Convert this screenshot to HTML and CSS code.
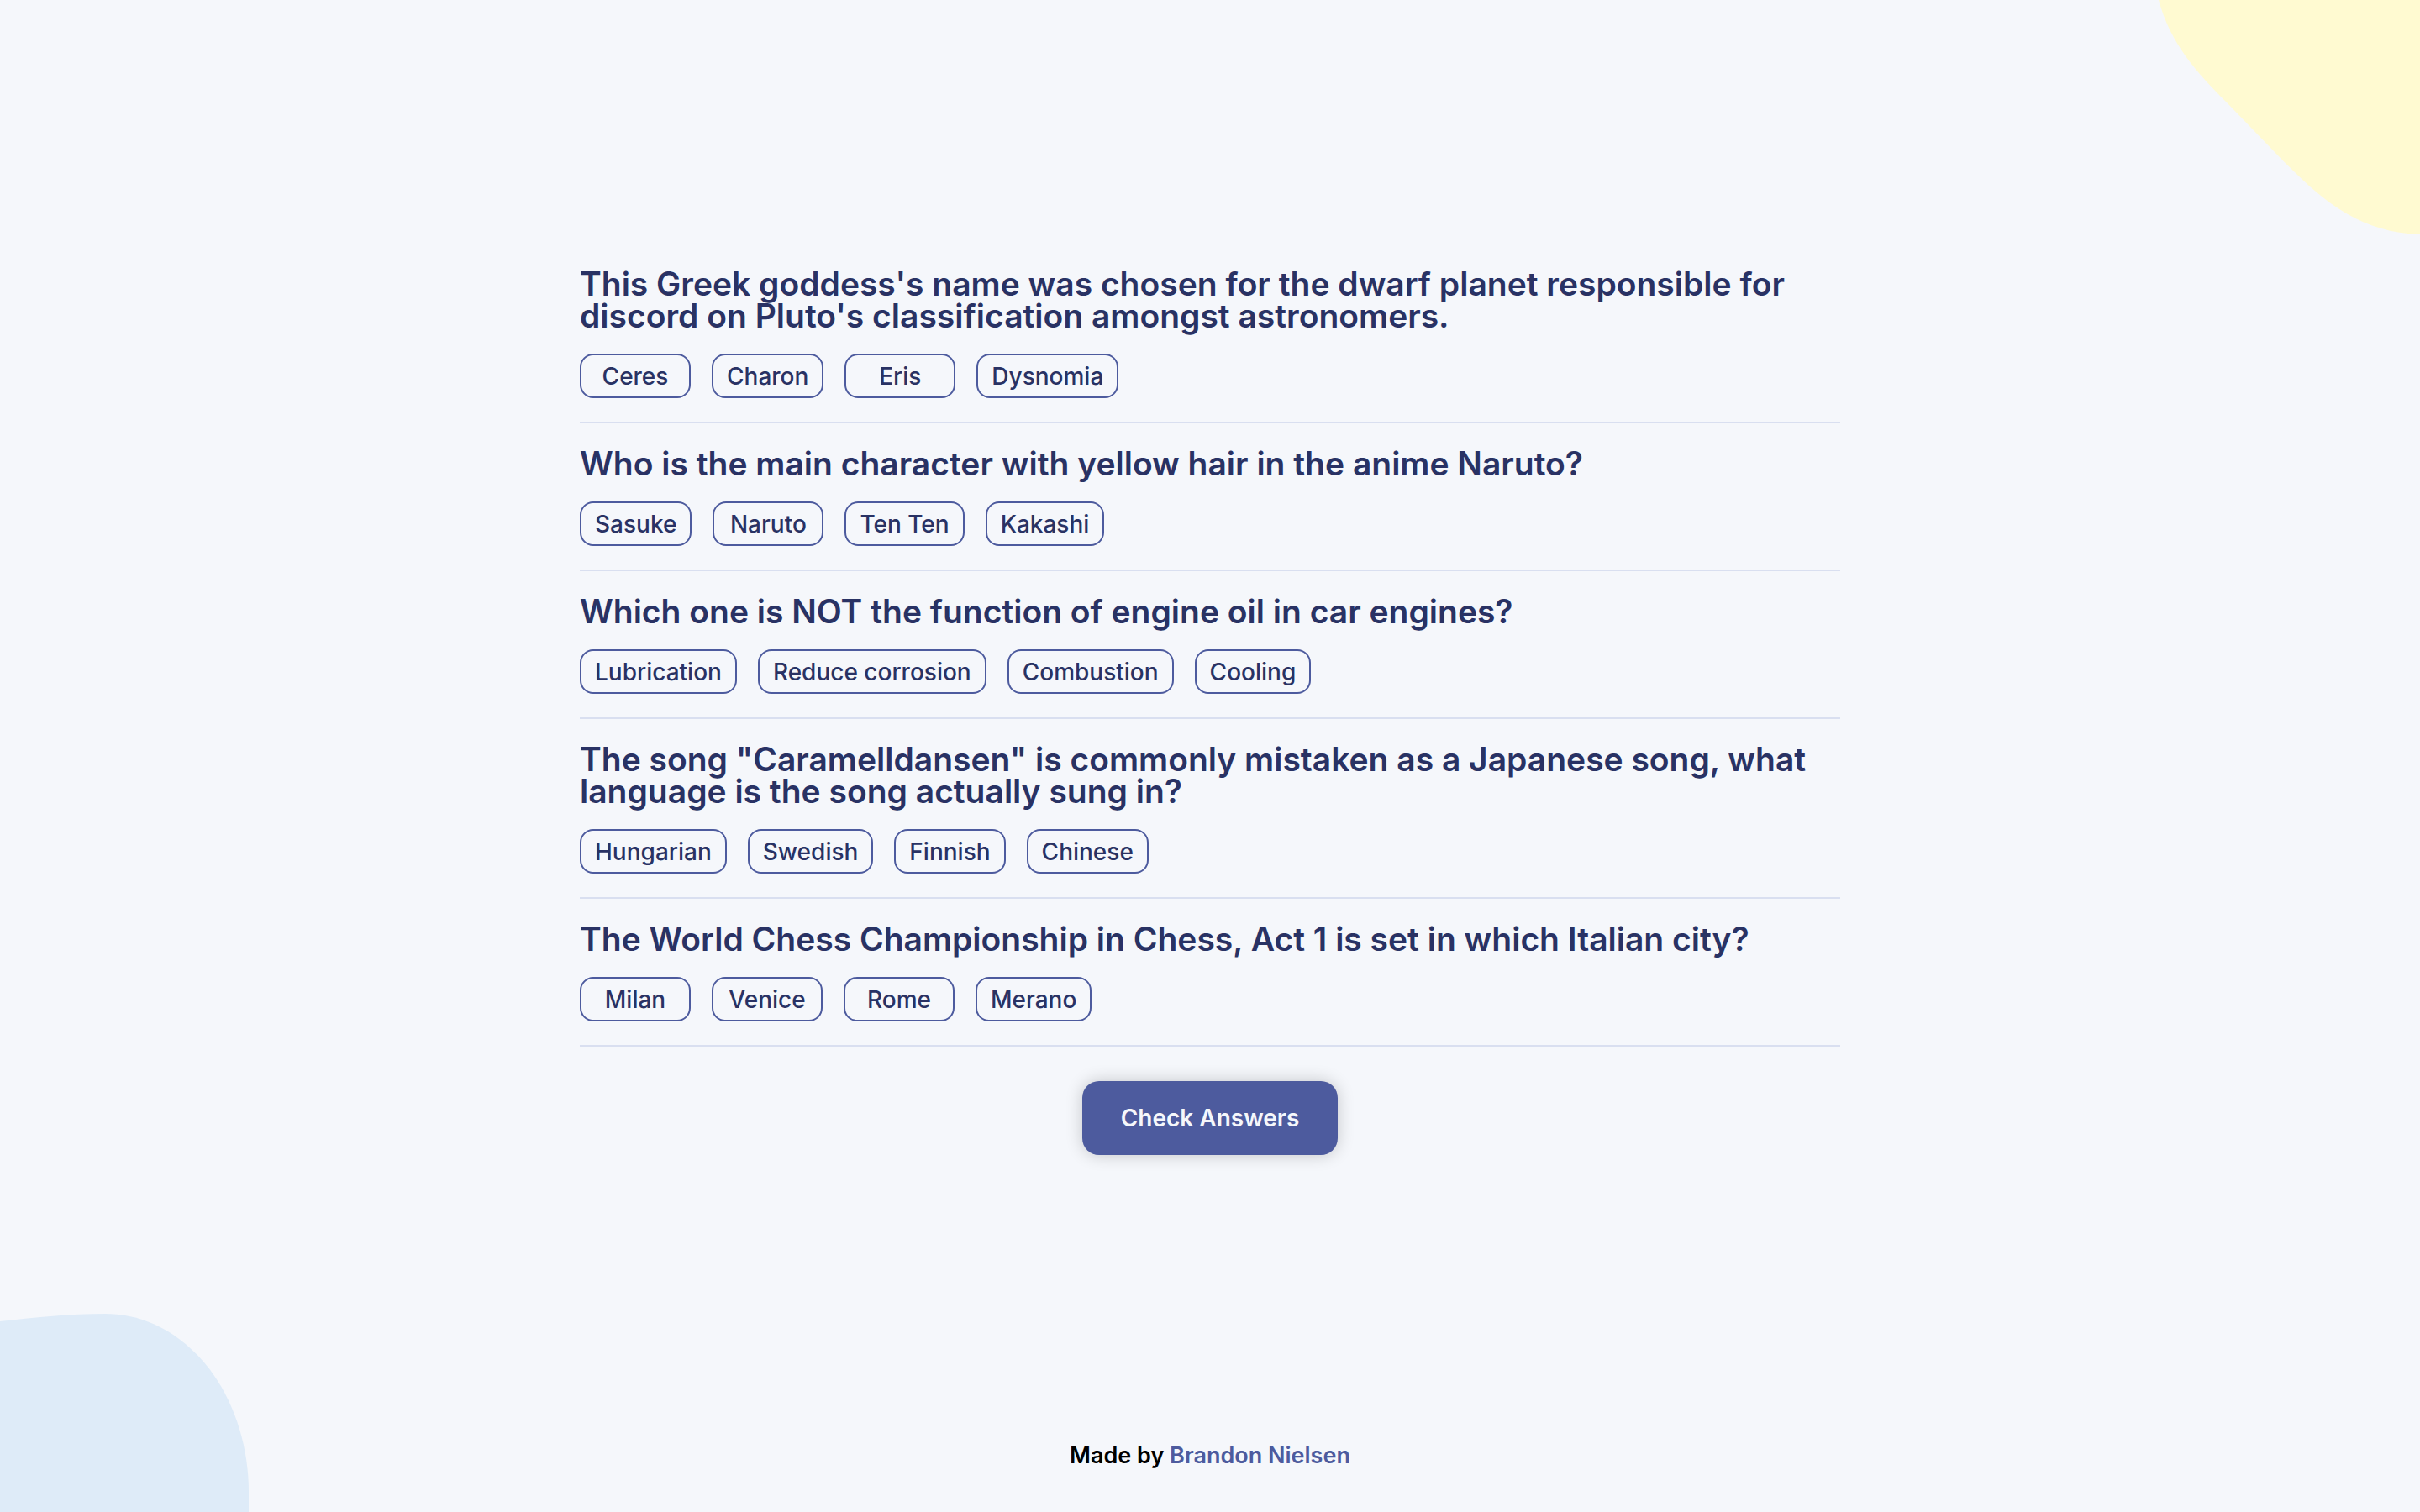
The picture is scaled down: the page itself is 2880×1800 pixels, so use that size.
FILE: index.html
```html
<!DOCTYPE html>
<html lang="en">
<head>
  <meta charset="utf-8">
  <meta name="viewport" content="width=device-width, initial-scale=1">
  <title>Quizzical</title>
  <link rel="stylesheet" href="styles.css">
</head>
<body>
  <svg class="blob blob-top" viewBox="0 0 311 280" aria-hidden="true">
    <path d="M0 0C14 52 45 86 81 122L138 181C186 230 232 277 311 279V0Z"/>
  </svg>
  <svg class="blob blob-bottom" viewBox="0 0 296 236" aria-hidden="true">
    <path d="M0 9C45 4 82 0 125 0C162 0 205 14 243 58C277 98 296 155 296 212V236H0Z"/>
  </svg>

  <main class="quiz">
    <section class="question">
      <h2 class="prompt">This Greek goddess's name was chosen for the dwarf planet responsible for discord on Pluto's classification amongst astronomers.</h2>
      <div class="answers">
        <button class="answer" type="button">Ceres</button>
        <button class="answer" type="button">Charon</button>
        <button class="answer" type="button">Eris</button>
        <button class="answer" type="button">Dysnomia</button>
      </div>
    </section>
    <section class="question">
      <h2 class="prompt">Who is the main character with yellow hair in the anime Naruto?</h2>
      <div class="answers">
        <button class="answer" type="button">Sasuke</button>
        <button class="answer" type="button">Naruto</button>
        <button class="answer" type="button">Ten Ten</button>
        <button class="answer" type="button">Kakashi</button>
      </div>
    </section>
    <section class="question">
      <h2 class="prompt">Which one is NOT the function of engine oil in car engines?</h2>
      <div class="answers">
        <button class="answer" type="button">Lubrication</button>
        <button class="answer" type="button">Reduce corrosion</button>
        <button class="answer" type="button">Combustion</button>
        <button class="answer" type="button">Cooling</button>
      </div>
    </section>
    <section class="question">
      <h2 class="prompt">The song "Caramelldansen" is commonly mistaken as a Japanese song, what language is the song actually sung in?</h2>
      <div class="answers">
        <button class="answer" type="button">Hungarian</button>
        <button class="answer" type="button">Swedish</button>
        <button class="answer" type="button">Finnish</button>
        <button class="answer" type="button">Chinese</button>
      </div>
    </section>
    <section class="question">
      <h2 class="prompt">The World Chess Championship in Chess, Act 1 is set in which Italian city?</h2>
      <div class="answers">
        <button class="answer" type="button">Milan</button>
        <button class="answer" type="button">Venice</button>
        <button class="answer" type="button">Rome</button>
        <button class="answer" type="button">Merano</button>
      </div>
    </section>
    <button class="check" type="button">Check Answers</button>
  </main>

  <footer class="footer">Made by <a class="author" href="#">Brandon Nielsen</a></footer>
</body>
</html>
```
FILE: styles.css
```css
* {
  box-sizing: border-box;
}

body {
  display: flex;
  flex-direction: column;
  min-height: 100vh;
  margin: 0;
  background: #f5f7fb;
  color: #293264;
  font-family: Inter, "Liberation Sans", sans-serif;
}

.blob {
  position: absolute;
  z-index: -1;
}

.blob-top {
  top: 0;
  right: 0;
  width: 311px;
  fill: #fffad1;
}

.blob-bottom {
  bottom: 0;
  left: 0;
  width: 296px;
  fill: #deebf8;
}

.quiz {
  display: flex;
  flex: 1;
  flex-direction: column;
  justify-content: center;
  width: 100%;
  max-width: 1500px;
  margin: 0 auto;
}

.question {
  padding: 29px 0 28px;
  border-bottom: 2px solid #d9dff0;
}

.prompt {
  margin: 0 0 26px;
  font-size: 39px;
  font-weight: 600;
  line-height: 38px;
}

.answers {
  display: flex;
  flex-wrap: wrap;
  gap: 25px;
}

.answer {
  min-width: 132px;
  height: 53px;
  padding: 0 16px;
  border: 2px solid #4d5b9e;
  border-radius: 16px;
  background: transparent;
  color: inherit;
  font: 500 28px/32px Inter, "Liberation Sans", sans-serif;
}

.check {
  align-self: center;
  height: 88px;
  margin-top: 41px;
  padding: 0 46px;
  border: 0;
  border-radius: 20px;
  background: #4d5b9e;
  box-shadow: 0 0 20px rgb(0 0 0 / 20%);
  color: #f5f7fb;
  font: 600 28px/32px Inter, "Liberation Sans", sans-serif;
}

.footer {
  padding: 52px 24px 51px;
  color: #000;
  font-size: 27px;
  font-weight: 600;
  line-height: 32px;
  text-align: center;
}

.author {
  color: #4d5b9e;
  text-decoration: none;
}
```
